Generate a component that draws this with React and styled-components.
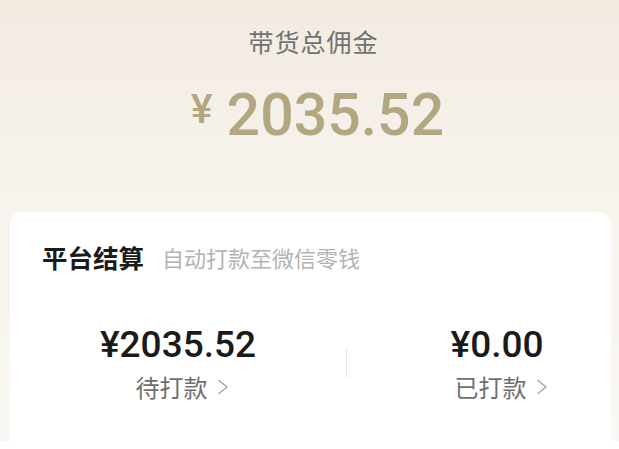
import React from 'react';
import styled, { createGlobalStyle } from 'styled-components';

const GlobalStyle = createGlobalStyle`
    html, body {
        margin: 0;
        padding: 0;
        background: #ffffff;
    }
    body {
        font-family: "Noto Sans CJK SC", "Noto Sans", sans-serif;
    }
`

const stats = [
    { amount: '¥2035.52', label: '待打款' },
    { amount: '¥0.00', label: '已打款' },
];

const Chevron = () => (
    <ChevronSvg viewBox="0 0 12 16" aria-hidden="true">
        <polyline points="2,1.5 10,8 2,14.5" fill="none" stroke="#a9a9a9" strokeWidth="1.6" strokeLinecap="round" strokeLinejoin="round" />
    </ChevronSvg>
);

const App = () => {
    return (
        <>
            <GlobalStyle />
            <MyPage>
                <MyHeader>
                    <MyTitle>带货总佣金</MyTitle>
                    <MyTotal>
                        <MyTotalYen>¥</MyTotalYen>
                        <MyTotalNumber>2035.52</MyTotalNumber>
                    </MyTotal>
                </MyHeader>
                <MyCard>
                    <MyCardHead>
                        <MyCardTitle>平台结算</MyCardTitle>
                        <MyCardHint>自动打款至微信零钱</MyCardHint>
                    </MyCardHead>
                    <MyStats>
                        <MyStat>
                            <MyAmount>{stats[0].amount}</MyAmount>
                            <MyLink>{stats[0].label}<Chevron /></MyLink>
                        </MyStat>
                        <MyDivider />
                        <MyStat $offset={36}>
                            <MyAmount>{stats[1].amount}</MyAmount>
                            <MyLink>{stats[1].label}<Chevron /></MyLink>
                        </MyStat>
                    </MyStats>
                </MyCard>
            </MyPage>
        </>
    );
};

export default App;

// Styled Components
const MyPage = styled.div`
    width: 619px;
    background: linear-gradient(180deg, #f2ebe2 0%, #f7f3ed 45%, #faf8f4 100%);
    overflow: hidden;
`

const MyHeader = styled.div`
    display: flex;
    flex-direction: column;
    align-items: center;
    padding-top: 26px;
`

const MyTitle = styled.div`
    font-size: 25px;
    line-height: 30px;
    color: #727272;
    letter-spacing: 1px;
    margin-left: 8px;
`

const MyTotal = styled.div`
    display: flex;
    align-items: flex-start;
    margin-top: 29px;
    margin-left: 16px;
    color: #b2a780;
    font-family: Roboto, "Liberation Sans", sans-serif;
    font-weight: 500;
`

const MyTotalYen = styled.span`
    font-size: 41px;
    line-height: 1;
    margin-top: 4px;
    margin-right: 14px;
`

const MyTotalNumber = styled.span`
    font-size: 59px;
    line-height: 1;
`

const MyCard = styled.div`
    margin: 68px 8px 0 10px;
    padding: 29px 0 39px;
    background: #ffffff;
    border-radius: 12px 12px 0 0;
`

const MyCardHead = styled.div`
    display: flex;
    align-items: center;
    padding-left: 32px;
`

const MyCardTitle = styled.span`
    font-size: 25.5px;
    line-height: 32px;
    font-weight: 700;
    color: #1b1b1b;
`

const MyCardHint = styled.span`
    margin-left: 18px;
    font-size: 22px;
    line-height: 32px;
    color: #b3b3b3;
`

const MyStats = styled.div`
    display: grid;
    grid-template-columns: 336px 1px 1fr;
    align-items: center;
    margin-top: 50px;
`

const MyStat = styled.div`
    display: flex;
    flex-direction: column;
    align-items: center;
    padding-left: ${(p) => p.$offset || 0}px;
`

const MyAmount = styled.div`
    font-family: Roboto, "Liberation Sans", sans-serif;
    font-size: 37px;
    line-height: 1.2;
    font-weight: 500;
    color: #1a1a1a;
`

const MyLink = styled.div`
    display: flex;
    align-items: center;
    margin-top: 5px;
    margin-left: 8px;
    font-size: 24px;
    line-height: 30px;
    color: #6f6f6f;
`

const ChevronSvg = styled.svg`
    width: 12px;
    height: 16px;
    margin-left: 9px;
`

const MyDivider = styled.div`
    width: 1px;
    height: 30px;
    background: #efe7db;
`
